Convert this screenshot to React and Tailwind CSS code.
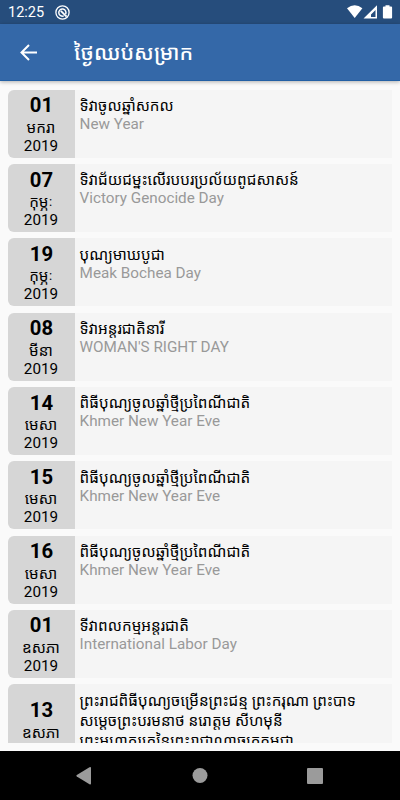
import React from 'react';

const holidays = [
  { day: '01', month: 'មករា', year: '2019', title: 'ទិវាចូលឆ្នាំសកល', subtitle: 'New Year' },
  { day: '07', month: 'កុម្ភៈ', year: '2019', title: 'ទិវាជ័យជម្នះលើរបបរប្រល័យពូជសាសន៍', subtitle: 'Victory Genocide Day' },
  { day: '19', month: 'កុម្ភៈ', year: '2019', title: 'បុណ្យមាឃបូជា', subtitle: 'Meak Bochea Day' },
  { day: '08', month: 'មីនា', year: '2019', title: 'ទិវាអន្តរជាតិនារី', subtitle: "WOMAN'S RIGHT DAY" },
  { day: '14', month: 'មេសា', year: '2019', title: 'ពិធីបុណ្យចូលឆ្នាំថ្មីប្រពៃណីជាតិ', subtitle: 'Khmer New Year Eve' },
  { day: '15', month: 'មេសា', year: '2019', title: 'ពិធីបុណ្យចូលឆ្នាំថ្មីប្រពៃណីជាតិ', subtitle: 'Khmer New Year Eve' },
  { day: '16', month: 'មេសា', year: '2019', title: 'ពិធីបុណ្យចូលឆ្នាំថ្មីប្រពៃណីជាតិ', subtitle: 'Khmer New Year Eve' },
  { day: '01', month: 'ឧសភា', year: '2019', title: 'ទីវាពលកម្មអន្តរជាតិ', subtitle: 'International Labor Day' },
];

const kingBirthday = {
  day: '13',
  month: 'ឧសភា',
  title: [
    'ព្រះរាជពិធីបុណ្យចម្រើនព្រះជន្ម ព្រះករុណា ព្រះបាទ',
    'សម្ដេចព្រះបរមនាថ នរោត្តម សីហមុនី',
    'ព្រះមហាក្សត្រនៃព្រះរាជាណាចក្រកម្ពុជា',
  ],
};

const StatusBar = () => (
  <div className="h-6 shrink-0 bg-[#264d7c] flex items-center justify-between pl-2 pr-[7px] text-white">
    <div className="flex items-center">
      <span className="w-9 text-[14.5px] leading-6 pt-[2px] whitespace-nowrap">12:25</span>
      <svg className="ml-[11px]" width="15" height="15" viewBox="0 0 15 15" fill="none">
        <circle cx="7.5" cy="7.5" r="6.6" stroke="#fff" strokeWidth="1.3" />
        <path d="M10.6 9.2A3.6 3.6 0 1 0 8.8 10.9" stroke="#fff" strokeWidth="1.5" />
        <path d="M5.8 5.8L11.6 11.6" stroke="#fff" strokeWidth="1.8" />
      </svg>
    </div>
    <svg width="46" height="14" viewBox="0 0 46 14" fill="#fff">
      <path d="M0 3.3Q7.7-2.6 15.4 3.3L7.7 13Z" />
      <path fillRule="evenodd" d="M16.5 13.5L30 .3V13.5ZM24 12H28.5V5L24 9.4Z" />
      <path d="M38.5 .3h4v1.2h1.6a1 1 0 0 1 1 1v10a1 1 0 0 1-1 1h-7.2a1 1 0 0 1-1-1v-10a1 1 0 0 1 1-1h1.6Z" />
    </svg>
  </div>
);

const AppBar = () => (
  <div className="relative z-10 h-[57px] shrink-0 bg-[#3468a8] border-b border-[#2360a5] shadow-[0_1px_4px_rgba(0,0,0,0.3)] flex items-center pl-5 text-white">
    <svg width="18" height="17" viewBox="0 0 18 17" fill="none" stroke="#fff" strokeWidth="2">
      <path d="M17 8.5H2M9 1L1.5 8.5L9 16" />
    </svg>
    <h1 className="ml-9 mt-[3px] text-[21px] font-medium whitespace-nowrap">ថ្ងៃឈប់សម្រាក</h1>
  </div>
);

const DateBox = ({ day, month, year }) => (
  <div className="w-[67px] shrink-0 rounded-l-[6px] bg-[#d6d6d6] flex flex-col items-center text-black">
    <div className="mt-[5.5px] h-[21px] text-[20.3px] leading-[21px] font-bold">{day}</div>
    <div className="mt-[2.5px] h-[19px] pr-px text-[15.25px] leading-[19px] whitespace-nowrap">{month}</div>
    <div className="h-[18px] pr-px text-[15.25px] leading-[17px]">{year}</div>
  </div>
);

const HolidayCard = ({ holiday }) => (
  <div className="h-[68px] shrink-0 rounded-l-[6px] bg-[#f5f5f5] flex">
    <DateBox day={holiday.day} month={holiday.month} year={holiday.year} />
    <div className="pl-[4.6px] pt-[6.4px]">
      <div className="h-5 text-[15.25px] leading-5 text-black whitespace-nowrap">{holiday.title}</div>
      <div className="text-[15.25px] leading-[17px] text-[#999999]">{holiday.subtitle}</div>
    </div>
  </div>
);

export default function App() {
  return (
    <div className="w-[400px] h-[800px] overflow-hidden bg-[#fafafa] flex flex-col font-[Roboto,'Noto_Sans_Khmer','Khmer_OS',sans-serif]">
      <StatusBar />
      <AppBar />
      <div className="mt-[8.7px] mx-2 h-[653.3px] shrink-0 overflow-hidden flex flex-col gap-[6.33px]">
        {holidays.map((holiday, i) => (
          <HolidayCard key={i} holiday={holiday} />
        ))}
        {/* taller card, runs past the bottom of the list */}
        <div className="h-[88px] shrink-0 rounded-l-[6px] bg-[#f5f5f5] flex">
          <div className="w-[67px] shrink-0 rounded-l-[6px] bg-[#d6d6d6] flex flex-col items-center text-black">
            <div className="mt-4 h-[21px] text-[20.3px] leading-[21px] font-bold">{kingBirthday.day}</div>
            <div className="mt-[3px] pr-px text-[15.25px] leading-[19px] whitespace-nowrap">{kingBirthday.month}</div>
          </div>
          <div className="pl-[4.6px] pt-[7px]">
            {kingBirthday.title.map((line) => (
              <div key={line} className="h-5 text-[15.25px] leading-5 text-black whitespace-nowrap">{line}</div>
            ))}
          </div>
        </div>
      </div>
      {/* Android navigation bar */}
      <div className="mt-2 h-[49px] shrink-0 bg-black flex items-center">
        <svg width="400" height="49" viewBox="0 0 400 49" fill="#9b9b9b">
          <path d="M91 17v15.5a1 1 0 0 1-1.5 .8L76.8 25.6a1 1 0 0 1 0-1.6L89.5 16.2a1 1 0 0 1 1.5 .8Z" />
          <circle cx="200" cy="24.5" r="7.5" />
          <rect x="307" y="17" width="16" height="16" rx="1" />
        </svg>
      </div>
    </div>
  );
}
